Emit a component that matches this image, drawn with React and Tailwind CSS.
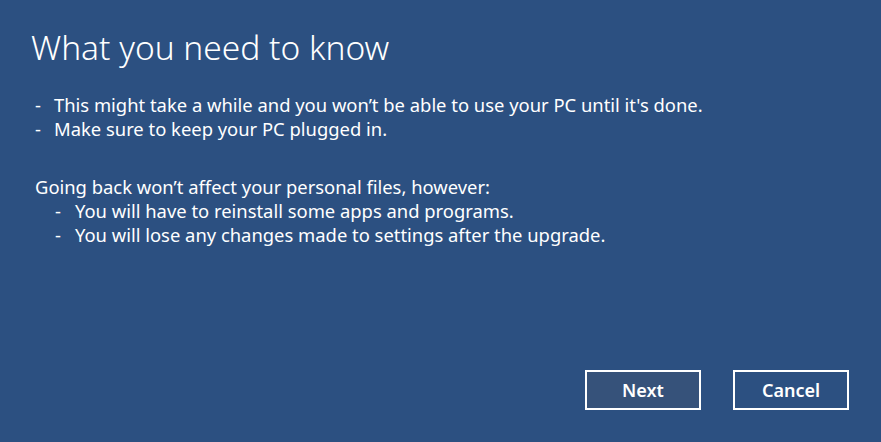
export default function App() {
  return (
    <div className="w-[881px] h-[442px] bg-[#2c5081] text-white flex flex-col font-['Noto_Sans',sans-serif] overflow-hidden">
      <h1 className="ml-[31px] mt-[25px] text-[33.5px] font-light leading-[44px]">What you need to know</h1>

      <ul className="ml-[35px] mt-[24px] text-[18.4px] leading-[24px]">
        <li className="flex">
          <span className="w-[19px]">-</span>
          <span>This might take a while and you won’t be able to use your PC until it's done.</span>
        </li>
        <li className="flex">
          <span className="w-[19px]">-</span>
          <span>Make sure to keep your PC plugged in.</span>
        </li>
      </ul>

      <div className="ml-[35px] mt-[34px] text-[18.4px] leading-[24px]">
        <p>Going back won’t affect your personal files, however:</p>
        <ul className="ml-[20px]">
          <li className="flex">
            <span className="w-[20px]">-</span>
            <span>You will have to reinstall some apps and programs.</span>
          </li>
          <li className="flex">
            <span className="w-[20px]">-</span>
            <span>You will lose any changes made to settings after the upgrade.</span>
          </li>
        </ul>
      </div>

      <div className="mt-auto mb-[32px] mr-[32px] flex justify-end gap-[32px]">
        <button className="w-[116px] h-[40px] border-2 border-white bg-[#36527a] text-[18px] font-semibold">Next</button>
        <button className="w-[116px] h-[40px] border-2 border-white bg-[#2c5081] text-[18px] font-semibold">Cancel</button>
      </div>
    </div>
  );
}
